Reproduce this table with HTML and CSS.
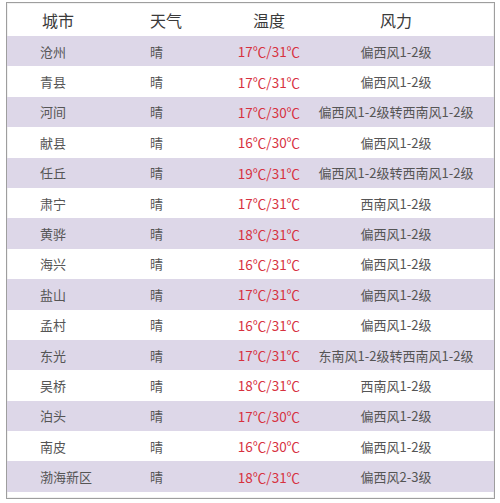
FILE: index.html
```html
<!DOCTYPE html>
<html lang="zh-CN">
<head>
<meta charset="utf-8">
<title>天气</title>
<link rel="stylesheet" href="styles.css">
</head>
<body>
<div class="sheet">
  <div class="row head">
    <div class="c-city">城市</div>
    <div class="c-wx">天气</div>
    <div class="c-temp">温度</div>
    <div class="c-wind">风力</div>
  </div>
  <div class="row alt"><div class="c-city">沧州</div><div class="c-wx">晴</div><div class="c-temp">17℃/31℃</div><div class="c-wind">偏西风1-2级</div></div>
  <div class="row"><div class="c-city">青县</div><div class="c-wx">晴</div><div class="c-temp">17℃/31℃</div><div class="c-wind">偏西风1-2级</div></div>
  <div class="row alt"><div class="c-city">河间</div><div class="c-wx">晴</div><div class="c-temp">17℃/30℃</div><div class="c-wind long">偏西风1-2级转西南风1-2级</div></div>
  <div class="row"><div class="c-city">献县</div><div class="c-wx">晴</div><div class="c-temp">16℃/30℃</div><div class="c-wind">偏西风1-2级</div></div>
  <div class="row alt"><div class="c-city">任丘</div><div class="c-wx">晴</div><div class="c-temp">19℃/31℃</div><div class="c-wind long">偏西风1-2级转西南风1-2级</div></div>
  <div class="row"><div class="c-city">肃宁</div><div class="c-wx">晴</div><div class="c-temp">17℃/31℃</div><div class="c-wind">西南风1-2级</div></div>
  <div class="row alt"><div class="c-city">黄骅</div><div class="c-wx">晴</div><div class="c-temp">18℃/31℃</div><div class="c-wind">偏西风1-2级</div></div>
  <div class="row"><div class="c-city">海兴</div><div class="c-wx">晴</div><div class="c-temp">16℃/31℃</div><div class="c-wind">偏西风1-2级</div></div>
  <div class="row alt"><div class="c-city">盐山</div><div class="c-wx">晴</div><div class="c-temp">17℃/31℃</div><div class="c-wind">偏西风1-2级</div></div>
  <div class="row"><div class="c-city">孟村</div><div class="c-wx">晴</div><div class="c-temp">16℃/31℃</div><div class="c-wind">偏西风1-2级</div></div>
  <div class="row alt"><div class="c-city">东光</div><div class="c-wx">晴</div><div class="c-temp">17℃/31℃</div><div class="c-wind long">东南风1-2级转西南风1-2级</div></div>
  <div class="row"><div class="c-city">吴桥</div><div class="c-wx">晴</div><div class="c-temp">18℃/31℃</div><div class="c-wind">西南风1-2级</div></div>
  <div class="row alt"><div class="c-city">泊头</div><div class="c-wx">晴</div><div class="c-temp">17℃/30℃</div><div class="c-wind">偏西风1-2级</div></div>
  <div class="row"><div class="c-city">南皮</div><div class="c-wx">晴</div><div class="c-temp">16℃/30℃</div><div class="c-wind">偏西风1-2级</div></div>
  <div class="row alt"><div class="c-city">渤海新区</div><div class="c-wx">晴</div><div class="c-temp">18℃/31℃</div><div class="c-wind">偏西风2-3级</div></div>
</div>
</body>
</html>
```
FILE: styles.css
```css
html, body {
  margin: 0;
  padding: 0;
  background: #ffffff;
}
body {
  font-family: "Noto Sans CJK SC", "Noto Sans", sans-serif;
  color: #555555;
}
.sheet {
  margin: 2px 0 0 6px;
  width: 487px;
  height: 495px;
  border: 1px solid #9e9e9e;
  background: #ffffff;
  box-shadow: inset 0 0 0 1px #f2f2f2;
}
.row {
  display: grid;
  grid-template-columns: 110px 70px 98px 156px;
  align-items: center;
  height: 30.4px;
  padding-left: 33px;
  font-size: 13px;
  white-space: nowrap;
}
.row.head {
  height: 33px;
  font-size: 16px;
  color: #3a3a3a;
}
.row.alt {
  background: #ddd7e8;
}
.c-city, .c-wx {
  text-align: left;
}
.head .c-city {
  padding-left: 2px;
}
.c-temp, .c-wind {
  text-align: center;
}
.row:not(.head) .c-temp {
  color: #d7313f;
  font-size: 13.5px;
}
.c-wind.long {
  font-size: 13px;
}
```
